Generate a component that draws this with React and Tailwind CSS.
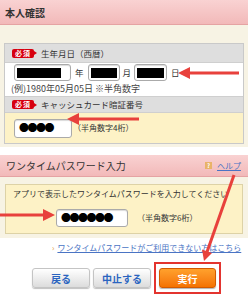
import React from "react";

// 本人確認 + ワンタイムパスワード入力 画面
const Badge = () => (
  <span className="flex items-center mr-[4px]">
    <span className="bg-[#d7000f] text-white text-[7px] font-bold leading-none px-[3px] py-[1px] rounded-[2px] tracking-[1px]">必須</span>
    <span className="w-0 h-0 border-y-[2px] border-y-transparent border-l-[3px] border-l-[#d7000f]" />
  </span>
);

const Redacted = ({ w, bw }) => (
  <div className={`h-[17px] ${w} bg-white border border-[#aaa] rounded-[3px] shadow-[inset_0_1px_1px_rgba(0,0,0,0.15)] flex items-center pl-[2px]`}>
    <div className={`h-[10px] ${bw} bg-black`} />
  </div>
);

const Dots = ({ n }) => (
  <span className="text-[10px] tracking-[-1.5px] leading-none text-black">{"●".repeat(n)}</span>
);

const Btn = ({ children, primary }) => (
  <div
    className={
      primary
        ? "w-[57px] h-[20px] rounded-[3px] border border-[#d35a00] bg-gradient-to-b from-[#ffa12c] to-[#f47200] flex items-center justify-center text-white text-[10px] font-bold shadow-[0_1px_1px_rgba(0,0,0,0.3)]"
        : "w-[58px] h-[20px] rounded-[3px] border border-[#c4c4c4] bg-gradient-to-b from-white to-[#dcdcdc] flex items-center justify-center text-[#2a64c0] text-[10px] font-bold shadow-[0_1px_1px_rgba(0,0,0,0.25)]"
    }
  >
    {children}
  </div>
);

export default function App() {
  return (
    <div className="relative w-[248px] h-[300px] overflow-hidden bg-white text-[#333] font-['Noto_Sans_CJK_JP',sans-serif]">
      {/* 本人確認 */}
      <div className="h-[25px] bg-gradient-to-b from-[#f9d2d2] to-[#f2b9b9] border-b border-[#e5a3a3] flex items-center pl-[5px] text-[10px] font-bold">
        本人確認
      </div>
      <div className="bg-[#f7f3e4] pt-[18px] px-[4px] pb-[3px]">
        <div className="border border-[#c9c9c9] bg-white">
          <div className="h-[19px] bg-[#dedede] border-b border-[#cfcfcf] flex items-center pl-[7px] text-[8.5px]">
            <Badge />
            生年月日（西暦）
          </div>
          <div className="h-[33px] pl-[9px] pt-[1px]">
            <div className="flex items-center text-[8.5px]">
              <Redacted w="w-[57px]" bw="w-[44px]" />
              <span className="mx-[4px]">年</span>
              <Redacted w="w-[32px]" bw="w-[26px]" />
              <span className="mx-[3px]">月</span>
              <Redacted w="w-[33px]" bw="w-[27px]" />
              <span className="ml-[4px]">日</span>
            </div>
            <div className="text-[9px] leading-none mt-[3px] -ml-[3px] text-[#444]">(例)1980年05月05日 ※半角数字</div>
          </div>
          <div className="h-[17px] bg-[#dedede] border-y border-[#cfcfcf] flex items-center pl-[7px] text-[8.5px]">
            <Badge />
            キャッシュカード暗証番号
          </div>
          <div className="h-[30px] bg-[#fdf2c6] pl-[9px] flex items-center">
            <div className="h-[19px] w-[58px] bg-white border border-[#aaa] rounded-[3px] flex items-center pl-[4px] shadow-[inset_0_1px_1px_rgba(0,0,0,0.15)]">
              <Dots n={4} />
            </div>
            <span className="text-[8px] ml-[1px]">（半角数字4桁）</span>
          </div>
        </div>
      </div>

      {/* ワンタイムパスワード入力 */}
      <div className="mt-[8px] h-[22px] bg-gradient-to-b from-[#f9d2d2] to-[#f2b9b9] border-b border-[#e5a3a3] flex items-center justify-between pl-[6px] pr-[7px]">
        <span className="text-[10px]">ワンタイムパスワード入力</span>
        <span className="flex items-center text-[8px]">
          <span className="w-[7px] h-[7px] bg-[#e9b368] text-white text-[6px] font-bold leading-none flex items-center justify-center mr-[5px]">?</span>
          <span className="text-[#4a74c4] underline">ヘルプ</span>
        </span>
      </div>
      <div className="bg-[#f7f3e4] pt-[7px] px-[5px] pb-[4px]">
        <div className="h-[50px] border border-[#ddd2a6] bg-[#fdf2c6] pl-[7px] pt-[5px]">
          <div className="text-[8px] leading-none">アプリで表示したワンタイムパスワードを入力してください</div>
          <div className="flex items-center mt-[11px] ml-[43px]">
            <div className="h-[18px] w-[72px] bg-white border border-[#aaa] rounded-[3px] flex items-center pl-[4px] shadow-[inset_0_1px_1px_rgba(0,0,0,0.15)]">
              <Dots n={6} />
            </div>
            <span className="text-[8px] ml-[9px]">（半角数字6桁）</span>
          </div>
        </div>
      </div>

      <div className="mt-[6px] pl-[52px] flex items-center text-[8px] leading-none">
        <span className="text-[#e39a2c] mr-[3px]">›</span>
        <span className="text-[#4a74c4] underline">ワンタイムパスワードがご利用できない方はこちら</span>
      </div>

      <div className="mt-[10px] pl-[32px] flex items-center">
        <Btn>戻る</Btn>
        <div className="ml-[3px]">
          <Btn>中止する</Btn>
        </div>
        <div className="ml-[3px] border-2 border-[#e3342f] px-[3px] py-[4px]">
          <Btn primary>実行</Btn>
        </div>
      </div>

      {/* 赤い矢印 */}
      <svg className="absolute inset-0 pointer-events-none" width="248" height="300" viewBox="0 0 248 300">
        <g fill="#e8413c" stroke="#e8413c">
          <line x1="187" y1="73" x2="239" y2="73" strokeWidth="3" />
          <polygon points="178,73 190,67 190,79" stroke="none" />
          <line x1="76" y1="119" x2="139" y2="119" strokeWidth="3" />
          <polygon points="67,119 79,113 79,125" stroke="none" />
          <line x1="0" y1="215" x2="45" y2="215" strokeWidth="3" />
          <polygon points="55,215 43,209 43,221" stroke="none" />
          <line x1="234" y1="175" x2="207" y2="252" strokeWidth="3" />
          <polygon points="204,261 212,253 202,249.5" stroke="none" />
        </g>
      </svg>
    </div>
  );
}
